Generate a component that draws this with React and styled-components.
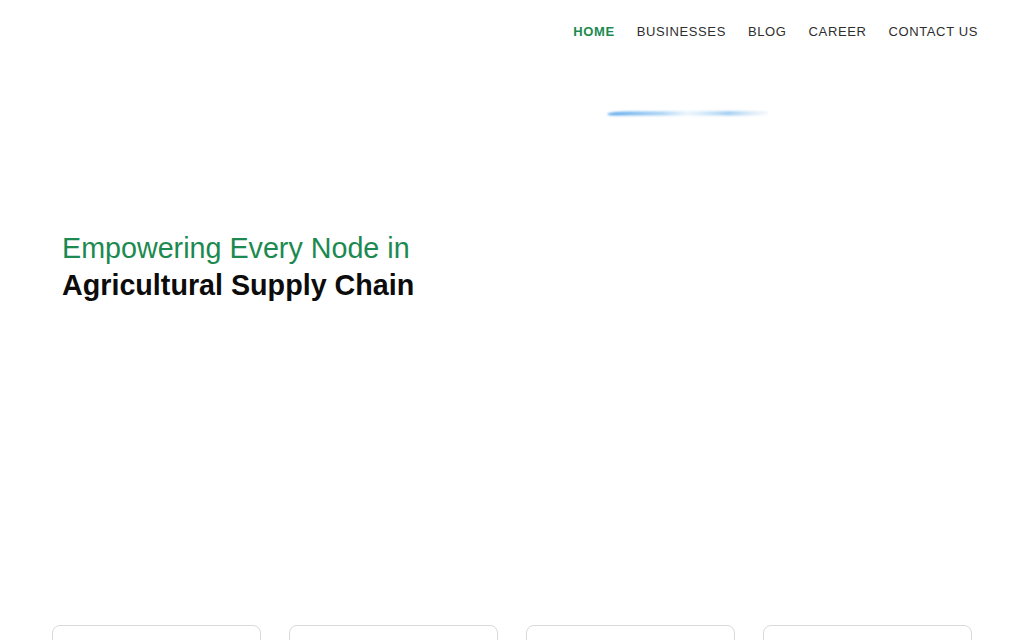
import styled, { createGlobalStyle } from 'styled-components'

const GlobalStyle = createGlobalStyle`
  html, body {
    margin: 0;
    padding: 0;
    background: #fff;
    font-family: "Liberation Sans", Arial, sans-serif;
  }
  * { box-sizing: border-box; }
`

const links = ['HOME', 'BUSINESSES', 'BLOG', 'CAREER', 'CONTACT US']

export default function App() {
  return (
    <Page>
      <GlobalStyle />
      <Header>
        <Nav>
          {links.map((l, i) => (
            <NavLink key={l} $active={i === 0}>{l}</NavLink>
          ))}
        </Nav>
      </Header>
      <Hero>
        <Streak>
          <svg width="180" height="20" viewBox="0 0 180 20">
            <defs>
              <linearGradient id="sg" x1="0" x2="1" y1="0" y2="0">
                <stop offset="0" stopColor="#4a9ee8" stopOpacity="0.95" />
                <stop offset="0.35" stopColor="#8cc4f0" stopOpacity="0.7" />
                <stop offset="0.5" stopColor="#d6ebfa" stopOpacity="0.5" />
                <stop offset="0.75" stopColor="#7ab8ec" stopOpacity="0.7" />
                <stop offset="1" stopColor="#dfe9f2" stopOpacity="0.3" />
              </linearGradient>
              <filter id="sb" x="-10%" y="-100%" width="120%" height="300%">
                <feGaussianBlur stdDeviation="1.2" />
              </filter>
            </defs>
            <path d="M8 11 Q12 8.5 30 8.5 L168 8 L170 11 L160 12.5 L20 12.5 Q9 12.5 8 11 Z" fill="url(#sg)" filter="url(#sb)" />
          </svg>
        </Streak>
        <Heading>
          <Light>Empowering Every Node in</Light>
          <Strong>Agricultural Supply Chain</Strong>
        </Heading>
      </Hero>
      <Cards>
        {[0, 1, 2, 3].map((i) => (
          <Card key={i} />
        ))}
      </Cards>
    </Page>
  )
}

const Page = styled.div`
  width: 1024px;
  height: 640px;
  overflow: hidden;
`

const Header = styled.header`
  height: 62px;
  display: flex;
  align-items: center;
  justify-content: flex-end;
  padding-right: 46px;
`

const Nav = styled.nav`
  display: flex;
  gap: 22px;
`

const NavLink = styled.a`
  font-size: 13px;
  letter-spacing: 0.62px;
  font-weight: ${(p) => (p.$active ? 700 : 400)};
  color: ${(p) => (p.$active ? '#1c8a50' : '#2e2e2e')};
  cursor: pointer;
`

const Hero = styled.section`
  position: relative;
  height: 563px;
  padding: 168px 0 0 62px;
`

const Streak = styled.div`
  position: absolute;
  left: 599px;
  top: 41px;
  line-height: 0;
`

const Heading = styled.h1`
  margin: 0;
  font-size: 28.7px;
  line-height: 37px;
  display: flex;
  flex-direction: column;
`

const Light = styled.span`
  font-weight: 300;
  color: #1c8a50;
`

const Strong = styled.span`
  font-weight: 700;
  color: #0c0c0c;
`

const Cards = styled.div`
  display: grid;
  grid-template-columns: repeat(4, 209px);
  gap: 28px;
  justify-content: center;
`

const Card = styled.div`
  height: 160px;
  border: 1px solid #d9d9d9;
  border-radius: 8px;
  background: #fff;
`
